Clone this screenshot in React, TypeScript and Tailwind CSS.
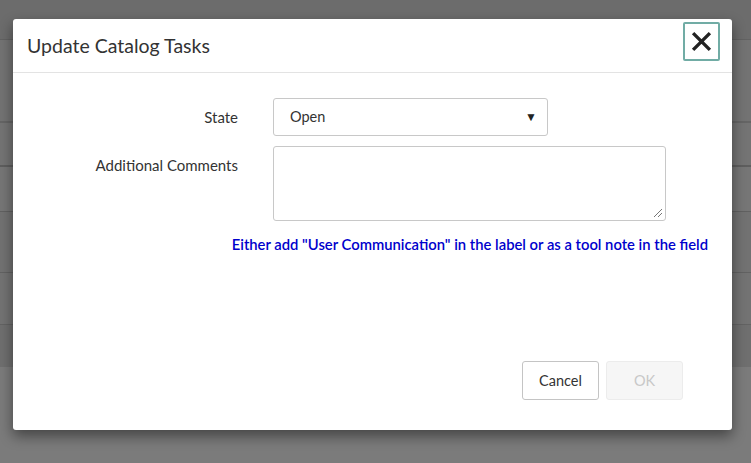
const FONT = "font-['Lato','Open_Sans',sans-serif]";

// faint page rows behind the modal backdrop
const BG_ROWS = [
  { h: "h-[40px]", cls: "bg-[#6c6c6c] border-b border-[#626262]" },
  { h: "h-[83px]", cls: "bg-[#737373] border-b-2 border-[#656565]" },
  { h: "h-[44px]", cls: "bg-[#747474] border-b-2 border-[#5e5e5e]" },
  { h: "h-[45px]", cls: "bg-[#767676] border-b border-[#616161]" },
  { h: "h-[61px]", cls: "bg-[#727272] border-b border-[#626262]" },
  { h: "h-[52px]", cls: "bg-[#737373] border-b border-[#636363]" },
  { h: "h-[42px]", cls: "bg-[#6f6f6f]" },
];

function CloseIcon() {
  return (
    <svg width="21" height="21" viewBox="0 0 20 20" fill="none">
      <path d="M2 2 L18 18 M18 2 L2 18" stroke="#222" strokeWidth="3.2" strokeLinecap="butt" />
    </svg>
  );
}

function ResizeGrip() {
  return (
    <svg width="10" height="10" viewBox="0 0 10 10" className="absolute right-[2px] bottom-[2px]">
      <path d="M9 1 L1 9 M9 5 L5 9" stroke="#777" strokeWidth="1" />
    </svg>
  );
}

export default function App() {
  return (
    <div className={`relative w-[751px] h-[463px] overflow-hidden bg-[#7b7b7b] ${FONT}`}>
      {/* page behind the backdrop */}
      <div className="flex flex-col w-full">
        {BG_ROWS.map((r, i) => (
          <div key={i} className={`${r.h} ${r.cls} w-full`} />
        ))}
      </div>

      {/* modal */}
      <div className="absolute left-[13px] top-[19px] w-[719px] h-[411px] bg-white rounded-[3px] shadow-[0_6px_14px_rgba(0,0,0,0.45)] flex flex-col">
        {/* header */}
        <div className="h-[54px] border-b border-[#e3e3e3] flex items-center justify-between pl-[14px] pr-[12px]">
          <h1 className="text-[19.5px] text-[#333] leading-none">Update Catalog Tasks</h1>
          <button className="w-[37px] h-[39px] -mt-[9px] border-2 border-[#71aca5] rounded-[2px] flex items-center justify-center">
            <CloseIcon />
          </button>
        </div>

        {/* body */}
        <div className="flex-1 flex flex-col pt-[25px] text-[15px] text-[#333]">
          <div className="flex items-start">
            <label className="w-[225px] text-right leading-[38px]">State</label>
            <div className="ml-[35px] w-[275px] h-[38px] border border-[#c8c8c8] rounded-[3px] flex items-center justify-between pl-[16px] pr-[10px] text-[14.5px]">
              <span>Open</span>
              <span className="text-[12px] text-[#222]">▼</span>
            </div>
          </div>

          <div className="flex items-start mt-[10px]">
            <label className="w-[225px] text-right leading-[38px]">Additional Comments</label>
            <div className="relative ml-[35px] w-[393px] h-[75px] border border-[#c8c8c8] rounded-[3px]">
              <ResizeGrip />
            </div>
          </div>

          <p className="mt-[12px] pr-[24px] text-right text-[14.8px] font-semibold text-[#0000cc]">
            Either add "User Communication" in the label or as a tool note in the field
          </p>

          <div className="mt-auto mb-[30px] mr-[49px] flex justify-end gap-[7px]">
            <button className="w-[77px] h-[39px] border border-[#c4c4c4] rounded-[3px] bg-white text-[#333] text-[14.5px]">
              Cancel
            </button>
            <button className="w-[77px] h-[39px] border border-[#ececec] rounded-[3px] bg-[#f6f6f6] text-[#c8c8c8] text-[14.5px]">
              OK
            </button>
          </div>
        </div>
      </div>
    </div>
  );
}
